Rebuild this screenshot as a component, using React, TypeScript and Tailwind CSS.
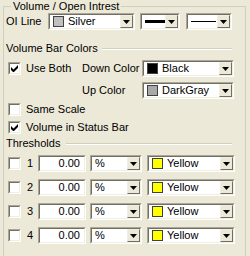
import type { ReactNode } from 'react';

const font = { fontFamily: '"Liberation Sans", Arial, sans-serif' };

function Arrow() {
  return (
    <svg width="7" height="4" viewBox="0 0 7 4">
      <path d="M0 0h7L3.5 4z" fill="#000" />
    </svg>
  );
}

function Combo({ width, children }: { width: string; children: ReactNode }) {
  return (
    <div className={`${width} h-[17px] flex border border-t-[#ACA899] border-l-[#ACA899] border-b-white border-r-white`}>
      <div className="flex-1 flex bg-white border border-t-[#716F64] border-l-[#716F64] border-b-[#F1EFE2] border-r-[#F1EFE2] min-w-0">
        <div className="flex-1 flex items-center min-w-0 overflow-hidden">{children}</div>
        <div className="w-[13px] flex items-center justify-center bg-[#ECE9D8] border border-t-[#F1EFE2] border-l-[#F1EFE2] border-b-[#716F64] border-r-[#716F64]">
          <Arrow />
        </div>
      </div>
    </div>
  );
}

function ColorCombo({ width, color, label }: { width: string; color: string; label: string }) {
  return (
    <Combo width={width}>
      <div className="ml-[3px] w-[11px] h-[11px] border border-[#404040]" style={{ backgroundColor: color }} />
      <span className="ml-[4px] text-[11px] leading-none">{label}</span>
    </Combo>
  );
}

function CheckBox({ checked, children }: { checked?: boolean; children?: ReactNode }) {
  return (
    <div className="flex items-center h-[13px]">
      <div className="w-[13px] h-[13px] flex border border-t-[#ACA899] border-l-[#ACA899] border-b-white border-r-white">
        <div className="flex-1 bg-white border border-t-[#716F64] border-l-[#716F64] border-b-[#F1EFE2] border-r-[#F1EFE2] flex items-center justify-center">
          {checked && (
            <svg width="7" height="7" viewBox="0 0 7 7">
              <path d="M0 2v3l2 2h1l4-4V0L2.5 4.5z" fill="#000" />
            </svg>
          )}
        </div>
      </div>
      {children && <span className="ml-[5px] text-[11px] leading-none">{children}</span>}
    </div>
  );
}

function Separator({ label, lineStart }: { label: string; lineStart: string }) {
  return (
    <div className="flex items-center h-[13px] w-[226px]">
      <span className={`${lineStart} text-[11px] leading-none`}>{label}</span>
      <div className="flex-1 h-[2px] border-t border-t-[#D0D0BF] border-b border-b-white" />
    </div>
  );
}

function ThresholdRow({ n, first }: { n: number; first?: boolean }) {
  return (
    <div className={`flex items-center h-[17px] ${first ? 'mt-[5px]' : 'mt-[7px]'}`}>
      <div className="ml-[2px]">
        <CheckBox />
      </div>
      <span className="ml-[6px] w-[11px] text-[11px] leading-none">{n}</span>
      <div className="w-[48px] h-[17px] flex border border-t-[#ACA899] border-l-[#ACA899] border-b-white border-r-white">
        <div className="flex-1 bg-white border border-t-[#716F64] border-l-[#716F64] border-b-[#F1EFE2] border-r-[#F1EFE2] flex items-center justify-end pr-[4px] text-[11px] leading-none">
          0.00
        </div>
      </div>
      <div className="ml-[4px]">
        <Combo width="w-[52px]">
          <span className="ml-[3px] text-[11px] leading-none">%</span>
        </Combo>
      </div>
      <div className="ml-[5px]">
        <ColorCombo width="w-[88px]" color="#FFFF00" label="Yellow" />
      </div>
    </div>
  );
}

export default function App() {
  return (
    <div className="w-[250px] h-[256px] bg-[#ECE9D8] overflow-hidden text-black" style={font}>
      <fieldset className="ml-[3px] w-[243px] h-[270px] border border-[#D0D0BF] pl-[2px]">
        <legend className="ml-[5px] px-[2px] text-[11px] leading-[13px]">Volume / Open Intrest</legend>

        <div className="flex items-center h-[17px]">
          <span className="w-[42px] text-[11px] leading-none">OI Line</span>
          <ColorCombo width="w-[87px]" color="#C0C0C0" label="Silver" />
          <div className="ml-[5px]">
            <Combo width="w-[40px]">
              <div className="ml-[3px] w-[20px] h-[3px] bg-black" />
            </Combo>
          </div>
          <div className="ml-[6px]">
            <Combo width="w-[46px]">
              <div className="ml-[3px] w-[25px] h-[1px] bg-black" />
            </Combo>
          </div>
        </div>

        <div className="mt-[12px]">
          <Separator label="Volume Bar Colors" lineStart="mr-[4px]" />
        </div>

        <div className="flex items-center h-[17px] mt-[5px]">
          <div className="ml-[2px] w-[74px]">
            <CheckBox checked>Use Both</CheckBox>
          </div>
          <span className="w-[60px] text-[11px] leading-none">Down Color</span>
          <ColorCombo width="w-[92px]" color="#000000" label="Black" />
        </div>

        <div className="flex items-center h-[17px] mt-[5px]">
          <span className="ml-[76px] w-[60px] text-[11px] leading-none">Up Color</span>
          <ColorCombo width="w-[92px]" color="#A9A9A9" label="DarkGray" />
        </div>

        <div className="ml-[2px] mt-[4px]">
          <CheckBox>Same Scale</CheckBox>
        </div>
        <div className="ml-[2px] mt-[5px]">
          <CheckBox checked>Volume in Status Bar</CheckBox>
        </div>

        <div className="mt-[3px]">
          <Separator label="Thresholds" lineStart="mr-[6px]" />
        </div>

        <ThresholdRow n={1} first />
        <ThresholdRow n={2} />
        <ThresholdRow n={3} />
        <ThresholdRow n={4} />
      </fieldset>
    </div>
  );
}
